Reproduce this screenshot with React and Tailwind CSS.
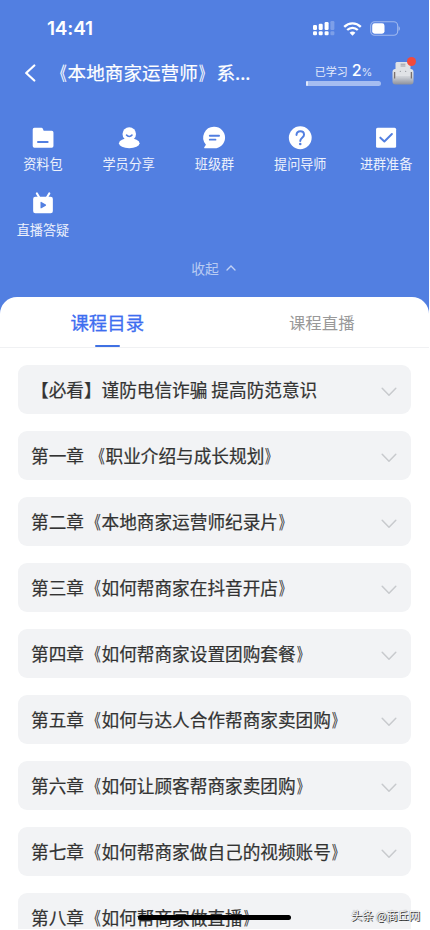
import React from 'react';

const shortcuts = [
  { label: '资料包', icon: <FolderIcon /> },
  { label: '学员分享', icon: <StudentIcon /> },
  { label: '班级群', icon: <ChatIcon /> },
  { label: '提问导师', icon: <QuestionIcon /> },
  { label: '进群准备', icon: <CheckIcon /> },
  { label: '直播答疑', icon: <LiveIcon /> },
];

const chapters = [
  '【必看】谨防电信诈骗 提高防范意识',
  '第一章 《职业介绍与成长规划》',
  '第二章《本地商家运营师纪录片》',
  '第三章《如何帮商家在抖音开店》',
  '第四章《如何帮商家设置团购套餐》',
  '第五章《如何与达人合作帮商家卖团购》',
  '第六章《如何让顾客帮商家卖团购》',
  '第七章《如何帮商家做自己的视频账号》',
  '第八章《如何帮商家做直播》',
];

function FolderIcon() {
  return (
    <svg width="28" height="28" viewBox="0 0 28 28">
      <path d="M4 2h8.2c.8 0 1.3.4 1.6 1.1l1 2.4h9.4a2 2 0 0 1 2 2v15.8a2 2 0 0 1-2 2H4a2 2 0 0 1-2-2V4a2 2 0 0 1 2-2z" fill="#fff" />
      <path d="M8.2 18.7h11.2" stroke="#527fe1" strokeWidth="2.4" strokeLinecap="round" />
    </svg>
  );
}

function StudentIcon() {
  return (
    <svg width="28" height="28" viewBox="0 0 28 28" fill="none">
      <ellipse cx="14.3" cy="20.2" rx="12" ry="5.8" fill="#fff" />
      <circle cx="14.3" cy="9.3" r="7.9" fill="#fff" />
      <path d="M11.1 10.6c1.6 2.2 4.8 2.2 6.4 0" stroke="#527fe1" strokeWidth="1.9" strokeLinecap="round" />
    </svg>
  );
}

function ChatIcon() {
  return (
    <svg width="28" height="28" viewBox="0 0 28 28">
      <path d="M14.4 1a12.5 12.5 0 1 1 0 25H3.6c-1 0-1.4-.9-.8-1.6l1.8-2.6A12.5 12.5 0 0 1 14.4 1z" fill="#fff" />
      <path d="M9.1 11.3h10.8M9.1 15.9h6.6" stroke="#527fe1" strokeWidth="2.2" strokeLinecap="round" />
    </svg>
  );
}

function QuestionIcon() {
  return (
    <svg width="28" height="28" viewBox="0 0 28 28" fill="none">
      <circle cx="14.3" cy="13.7" r="13.3" fill="#fff" />
      <path d="M9.9 10.4c.2-2.6 2-4.2 4.4-4.2 2.5 0 4.4 1.6 4.4 4 0 3.4-4.4 3.6-4.4 7.2" stroke="#527fe1" strokeWidth="2.3" strokeLinecap="round" />
      <circle cx="14.3" cy="20.9" r="1.5" fill="#527fe1" />
    </svg>
  );
}

function CheckIcon() {
  return (
    <svg width="28" height="28" viewBox="0 0 28 28" fill="none">
      <rect x="2.4" y="2" width="23.4" height="23.4" rx="1.8" fill="#fff" />
      <path d="M7.4 13.6l4.7 4.4 8.8-8.6" stroke="#527fe1" strokeWidth="2.3" strokeLinecap="round" strokeLinejoin="round" />
    </svg>
  );
}

function LiveIcon() {
  return (
    <svg width="28" height="28" viewBox="0 0 28 28" fill="none">
      <path d="M6.9 1.7l2.9 5M21.3 1.7l-2.9 5" stroke="#fff" strokeWidth="2.5" strokeLinecap="round" />
      <rect x="2.5" y="5.5" width="23" height="19.3" rx="2.6" fill="#fff" />
      <path d="M11.1 12.1v6.4c0 .5.5.8 1 .5l5.2-3.1c.4-.3.4-.9 0-1.2l-5.2-3.1c-.5-.3-1 0-1 .5z" fill="#527fe1" />
    </svg>
  );
}

// Narrows the book-title marks so they hug the title
function BookTitle({ text }) {
  return text.split(/([《》])/).map((part, i) => {
    if (part === '《') return <span key={i} className="inline-block origin-right -translate-x-px scale-x-[0.72]">{part}</span>;
    if (part === '》') return <span key={i} className="inline-block origin-left translate-x-px scale-x-[0.66]">{part}</span>;
    return part;
  });
}

function StatusBar() {
  return (
    <div className="flex h-[57px] items-center justify-between pl-[47px] pr-[29px]">
      <span className="text-[19px] leading-none font-semibold tracking-[-0.2px] font-[Inter,sans-serif]">14:41</span>
      <div className="flex items-center">
        <svg width="22" height="15" viewBox="0 0 22 15" fill="#fff">
          <rect x="0" y="4" width="4" height="5" rx="1.2" />
          <rect x="5.7" y="2.8" width="4" height="6.2" rx="1.2" />
          <rect x="11.6" y="1" width="4" height="8" rx="1.2" />
          <rect x="17.4" y="0" width="4" height="9" rx="1.2" opacity=".25" />
          <rect x="0" y="10.3" width="4" height="4" rx="1.2" />
          <rect x="5.7" y="10.3" width="4" height="4" rx="1.2" />
          <rect x="11.6" y="10.3" width="4" height="4" rx="1.2" />
          <rect x="17.4" y="10.3" width="4" height="4" rx="1.2" opacity=".25" />
        </svg>
        <svg className="ml-2" width="19" height="14" viewBox="0 0 19 14" fill="none">
          <path d="M1.2 4.8c4.7-4.6 11.9-4.6 16.6 0" stroke="#fff" strokeWidth="2.4" />
          <path d="M4.2 8c3-2.9 7.6-2.9 10.6 0" stroke="#fff" strokeWidth="2.3" />
          <path d="M9.5 13.8l-2.9-3.1c1.7-1.5 4.1-1.5 5.8 0z" fill="#fff" />
        </svg>
        <svg className="ml-2" width="30" height="15" viewBox="0 0 30 15" fill="none">
          <rect x=".7" y=".7" width="27" height="13.6" rx="4" stroke="#fff" strokeOpacity=".45" strokeWidth="1.1" />
          <rect x="2.2" y="2.3" width="12.3" height="10.4" rx="2.4" fill="#fff" />
          <path d="M28.6 5.2c1.6.7 1.6 3.9 0 4.6z" fill="#fff" fillOpacity=".5" />
        </svg>
      </div>
    </div>
  );
}

function Robot() {
  return (
    <div className="relative ml-[11px] h-[26px] w-[22px]">
      <svg width="22" height="26" viewBox="0 0 22 26">
        <defs>
          <linearGradient id="robot" x1="0" y1="0" x2="0" y2="1">
            <stop offset="0" stopColor="#e6e8eb" />
            <stop offset=".5" stopColor="#cfd2d8" />
            <stop offset="1" stopColor="#8d919c" />
          </linearGradient>
        </defs>
        <rect x=".5" y="9" width="21" height="15.5" rx="3" fill="url(#robot)" />
        <path d="M3.5 3.6c0-1.1.8-1.6 1.8-1.6h11.4c1 0 1.8.5 1.8 1.6V16h-15z" fill="#e0e2e6" />
        <path d="M2.6 12v6.4M19.4 12v6.4" stroke="#7b716e" strokeWidth="1.3" />
        <path d="M8.6 4.2h4.8M8.6 6h4.8" stroke="#9a9da4" strokeWidth="1" />
        <circle cx="8.3" cy="11.3" r=".6" fill="#8d9199" />
        <circle cx="13.7" cy="11.3" r=".6" fill="#8d9199" />
      </svg>
      <span className="absolute -top-[3px] -right-[2px] size-[9px] rounded-full bg-[#f24a3d]"></span>
    </div>
  );
}

function TitleBar() {
  return (
    <div className="flex h-8 items-center pl-6 pr-[15px]">
      <svg width="12" height="18" viewBox="0 0 12 18" fill="none">
        <path d="M10.3 1.5L2.2 9l8.1 7.5" stroke="#fff" strokeWidth="2.2" strokeLinecap="round" strokeLinejoin="round" />
      </svg>
      <h1 className="ml-[13px] -mt-[2px] flex-1 whitespace-nowrap text-[18.6px] leading-7 [-webkit-text-stroke:0.2px_#fff]">
        <BookTitle text="《本地商家运营师》系..." />
      </h1>
      <div className="w-[75px]">
        <div className="flex items-baseline justify-center leading-[18px]">
          <span className="text-[11px] text-white/85">已学习</span>
          <span className="ml-1 text-[16px] font-medium font-[Inter,sans-serif]">2</span>
          <span className="text-[11px] text-white/80 font-[Inter,sans-serif]">%</span>
        </div>
        <div className="h-[5px] rounded-full bg-[#a5bdf1]">
          <div className="h-full rounded-full bg-[#dfe8fb]" style={{ width: '2%' }}></div>
        </div>
      </div>
      <Robot />
    </div>
  );
}

function Chapter({ title }) {
  return (
    <li className="flex h-[49px] shrink-0 items-center justify-between rounded-[9px] bg-[#f2f3f5] pl-[13px] pr-[14px]">
      <span className="whitespace-nowrap text-[17.65px] leading-6 text-[#333] [-webkit-text-stroke:0.22px_#333]">
        <BookTitle text={title} />
      </span>
      <svg className="mt-1" width="16" height="10" viewBox="0 0 16 10" fill="none">
        <path d="M1.2 1.2L8 8.3l6.8-7.1" stroke="#c8cacd" strokeWidth="1.5" strokeLinecap="round" strokeLinejoin="round" />
      </svg>
    </li>
  );
}

export default function App() {
  return (
    <div className="relative flex h-[929px] w-[429px] flex-col overflow-hidden bg-[#527fe1] text-white font-['Noto_Sans_CJK_SC',sans-serif]">
      <StatusBar />
      <TitleBar />

      {/* Shortcuts */}
      <div className="mt-[37px] grid grid-cols-5 gap-y-[18px]">
        {shortcuts.map((item) => (
          <div key={item.label} className="flex h-12 flex-col items-center">
            {item.icon}
            <span className="mt-1 text-[13.1px] leading-5 text-white/90">{item.label}</span>
          </div>
        ))}
      </div>
      <div className="mt-[18px] flex h-5 items-center justify-center gap-[7px] pr-[2px] text-[13.8px] text-white/60">
        收起
        <svg width="10" height="6" viewBox="0 0 10 6" fill="none">
          <path d="M1 5l4-4 4 4" stroke="#fff" strokeOpacity=".65" strokeWidth="1.3" strokeLinecap="round" />
        </svg>
      </div>

      <div className="mt-[19px] flex-1 overflow-hidden rounded-t-[17px] bg-white">
        <div className="grid h-[51px] grid-cols-2 border-b border-[#f0f1f3] text-center">
          <div className="flex flex-col items-center justify-between">
            <span className="mt-[10px] text-[18.4px] leading-[30px] text-[#3d6df0] [-webkit-text-stroke:0.3px_#3d6df0]">课程目录</span>
            <span className="h-[2px] w-[25px] rounded-full bg-[#4071e3]"></span>
          </div>
          <span className="mt-[10px] text-[16.4px] leading-[30px] text-[#999]">课程直播</span>
        </div>
        <ul className="flex flex-col gap-[17px] px-[18px] pt-[17px]">
          {chapters.map((title) => (
            <Chapter key={title} title={title} />
          ))}
        </ul>
      </div>

      {/* Home indicator */}
      <div className="absolute bottom-[9px] left-[138px] h-[5px] w-[153px] rounded-full bg-black"></div>
      <div className="absolute bottom-[4px] right-[9px] whitespace-nowrap text-[11.2px] leading-5 text-white [text-shadow:1px_1px_0_#333,0_0_1px_#555]">头条 @商丘网</div>
    </div>
  );
}
